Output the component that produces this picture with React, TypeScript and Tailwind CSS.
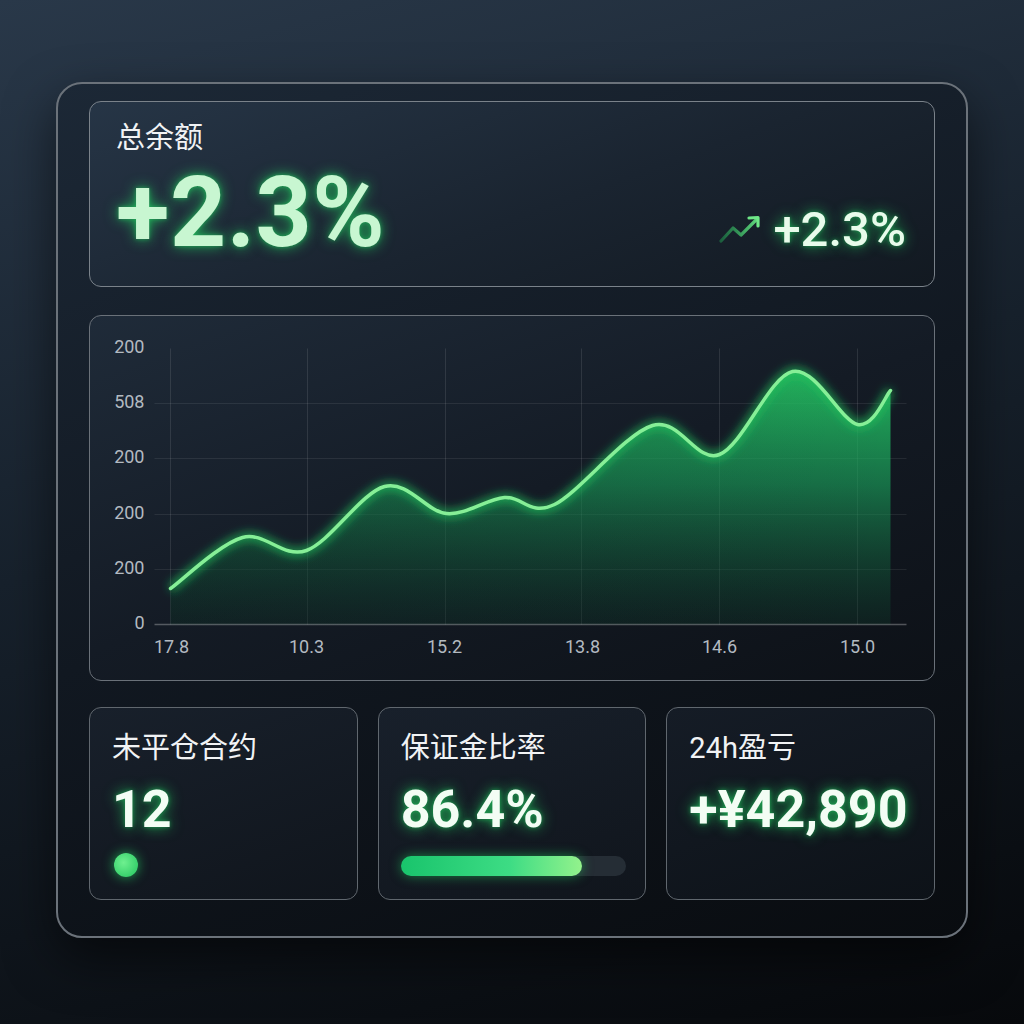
import React from "react";

type Pt = [number, number];

// chart coordinates are in page pixels; the svg viewBox starts at the card's inner corner
const curve: Pt[] = [
  [171, 589],
  [243, 538],
  [307, 551],
  [385, 487],
  [447, 514],
  [505, 498],
  [555, 505],
  [653, 426],
  [720, 455],
  [793, 372],
  [858, 425],
  [891, 391],
];

const yTicks = [
  { y: 349, label: "200" },
  { y: 404, label: "508" },
  { y: 459, label: "200" },
  { y: 515, label: "200" },
  { y: 570, label: "200" },
  { y: 625, label: "0" },
];

const xTicks = [
  { x: 172, label: "17.8" },
  { x: 307, label: "10.3" },
  { x: 445, label: "15.2" },
  { x: 583, label: "13.8" },
  { x: 720, label: "14.6" },
  { x: 858, label: "15.0" },
];

const gridX = [171, 308, 446, 582, 720, 858];
const gridY = [404, 459, 515, 570];

// Catmull-Rom -> cubic bezier
function smoothPath(pts: Pt[]) {
  let d = `M${pts[0][0]},${pts[0][1]}`;
  for (let i = 0; i < pts.length - 1; i++) {
    const p0 = pts[i - 1] || pts[i];
    const p1 = pts[i];
    const p2 = pts[i + 1];
    const p3 = pts[i + 2] || p2;
    const c1x = p1[0] + (p2[0] - p0[0]) / 6;
    const c1y = p1[1] + (p2[1] - p0[1]) / 6;
    const c2x = p2[0] - (p3[0] - p1[0]) / 6;
    const c2y = p2[1] - (p3[1] - p1[1]) / 6;
    d += ` C${c1x.toFixed(1)},${c1y.toFixed(1)} ${c2x.toFixed(1)},${c2y.toFixed(1)} ${p2[0]},${p2[1]}`;
  }
  return d;
}

const TrendIcon = () => (
  <svg width="42" height="28" viewBox="0 0 42 28" fill="none">
    <defs>
      <linearGradient id="trend" x1="0" y1="0" x2="42" y2="0" gradientUnits="userSpaceOnUse">
        <stop offset="0" stopColor="#22c55e" stopOpacity="0.35" />
        <stop offset="1" stopColor="#6ee787" />
      </linearGradient>
    </defs>
    <polyline
      points="2,26 14,13 22,20 38,4"
      stroke="url(#trend)"
      strokeWidth="3.2"
      strokeLinecap="round"
      strokeLinejoin="round"
    />
    <polyline
      points="30,3 39,2.5 39,11"
      stroke="#6ee787"
      strokeWidth="3.2"
      strokeLinecap="round"
      strokeLinejoin="round"
    />
  </svg>
);

const Chart = () => {
  const line = smoothPath(curve);
  const last = curve[curve.length - 1];
  const area = `${line} L${last[0]},625 L${curve[0][0]},625 Z`;

  return (
    <svg width="842" height="363" viewBox="90.5 316.5 842 363" className="block">
      <defs>
        <linearGradient id="area" x1="0" y1="370" x2="0" y2="625" gradientUnits="userSpaceOnUse">
          <stop offset="0" stopColor="#25c964" stopOpacity="0.9" />
          <stop offset="0.45" stopColor="#1aa65d" stopOpacity="0.62" />
          <stop offset="1" stopColor="#0e3e2c" stopOpacity="0.3" />
        </linearGradient>
        <linearGradient id="shade" x1="171" y1="0" x2="891" y2="0" gradientUnits="userSpaceOnUse">
          <stop offset="0" stopColor="#0b1016" stopOpacity="0.2" />
          <stop offset="1" stopColor="#0b1016" stopOpacity="0" />
        </linearGradient>
        <filter id="glow" x="-10%" y="-30%" width="120%" height="160%">
          <feGaussianBlur stdDeviation="5" />
        </filter>
      </defs>

      {gridY.map((y) => (
        <line key={y} x1="155" x2="907" y1={y} y2={y} stroke="#ffffff" strokeOpacity="0.08" strokeWidth="1" />
      ))}
      {gridX.map((x) => (
        <line key={x} x1={x} x2={x} y1="349" y2="625" stroke="#ffffff" strokeOpacity="0.1" strokeWidth="1" />
      ))}

      <path d={area} fill="url(#area)" />
      <path d={area} fill="url(#shade)" />

      <path d={line} fill="none" stroke="#22c55e" strokeOpacity="0.75" strokeWidth="8" filter="url(#glow)" />
      <path d={line} fill="none" stroke="#86ef97" strokeWidth="3.5" strokeLinecap="round" strokeLinejoin="round" />

      <line x1="155" x2="907" y1="625" y2="625" stroke="#ffffff" strokeOpacity="0.28" strokeWidth="1.5" />

      {yTicks.map((t, i) => (
        <text
          key={i}
          x="145"
          y={t.y}
          textAnchor="end"
          dominantBaseline="middle"
          fill="#b3bac1"
          fontSize="18"
          fontFamily="Roboto, sans-serif"
        >
          {t.label}
        </text>
      ))}
      {xTicks.map((t) => (
        <text
          key={t.label}
          x={t.x}
          y="649"
          textAnchor="middle"
          dominantBaseline="middle"
          fill="#b3bac1"
          fontSize="18"
          fontFamily="Roboto, sans-serif"
        >
          {t.label}
        </text>
      ))}
    </svg>
  );
};

const glowText = "[text-shadow:0_0_14px_rgba(34,197,94,0.85),0_0_4px_rgba(34,197,94,0.6)]";

export default function App() {
  return (
    <div className="min-h-screen w-full flex justify-center pt-[82px] pb-[86px] bg-[linear-gradient(165deg,#293849_0%,#17212c_45%,#07090c_100%)] font-[Roboto,'Noto_Sans_CJK_SC',sans-serif]">
      <div className="w-[912px] h-[856px] flex flex-col rounded-[26px] border-2 border-[#6b727a] bg-[linear-gradient(160deg,#1c2836_0%,#111821_50%,#090c10_100%)] px-[31px] pt-[17px] pb-[36px] shadow-[0_20px_50px_rgba(0,0,0,0.55)]">
        {/* balance */}
        <div className="h-[186px] flex flex-col rounded-[12px] border-[1.5px] border-[#7a828a] bg-[linear-gradient(160deg,#263546_0%,#1a2430_55%,#121921_100%)] pl-[26px] pr-[28px] pt-[19px]">
          <div className="text-[29px] leading-[1.2] text-[#f1f3f5]">总余额</div>
          <div className="mt-[8px] flex items-end justify-between">
            <div className={`text-[98px] leading-none font-bold tracking-[0.5px] text-[#c8f6d1] ${glowText}`}>+2.3%</div>
            <div className="mb-[8px] flex items-center gap-[12px]">
              <TrendIcon />
              <span className={`text-[49px] leading-none font-medium text-[#e8fbeb] ${glowText}`}>+2.3%</span>
            </div>
          </div>
        </div>

        {/* performance chart */}
        <div className="mt-[28px] h-[366px] overflow-hidden rounded-[12px] border-[1.5px] border-[#6a7179] bg-[linear-gradient(160deg,#1f2b39_0%,#141b25_50%,#0d1117_100%)]">
          <Chart />
        </div>

        {/* stats */}
        <div className="mt-[26px] h-[193px] grid grid-cols-3 gap-[20px]">
          <div className="flex flex-col rounded-[12px] border-[1.5px] border-[#60676e] bg-[linear-gradient(160deg,#18202b_0%,#10151c_100%)] pl-[22px] pt-[23px]">
            <div className="text-[29px] leading-[1.2] text-[#f1f3f5]">未平仓合约</div>
            <div className={`mt-[18px] text-[52px] leading-none font-bold text-[#f3fdf4] ${glowText}`}>12</div>
            <div className="mt-[17px] ml-[2px] h-[24px] w-[24px] rounded-full bg-[radial-gradient(circle_at_40%_40%,#6ef08f,#22c55e)] shadow-[0_0_12px_rgba(34,197,94,0.8)]" />
          </div>

          <div className="flex flex-col rounded-[12px] border-[1.5px] border-[#60676e] bg-[linear-gradient(160deg,#18202b_0%,#10151c_100%)] pl-[22px] pt-[23px]">
            <div className="text-[29px] leading-[1.2] text-[#f1f3f5]">保证金比率</div>
            <div className={`mt-[18px] text-[52px] leading-none font-bold text-[#f3fdf4] ${glowText}`}>86.4%</div>
            <div className="mt-[20px] h-[20px] w-[225px] rounded-full bg-[#252d35]">
              <div className="h-full w-[80.5%] rounded-full bg-[linear-gradient(90deg,#19c46c,#3ddc84_60%,#93f28c)] shadow-[0_0_12px_rgba(34,197,94,0.6)]" />
            </div>
          </div>

          <div className="flex flex-col rounded-[12px] border-[1.5px] border-[#60676e] bg-[linear-gradient(160deg,#151c26_0%,#0d1218_100%)] pl-[22px] pt-[23px]">
            <div className="text-[29px] leading-[1.2] text-[#f1f3f5]">24h盈亏</div>
            <div className={`mt-[18px] text-[52px] leading-none font-bold text-[#f3fdf4] ${glowText}`}>+¥42,890</div>
          </div>
        </div>
      </div>
    </div>
  );
}
